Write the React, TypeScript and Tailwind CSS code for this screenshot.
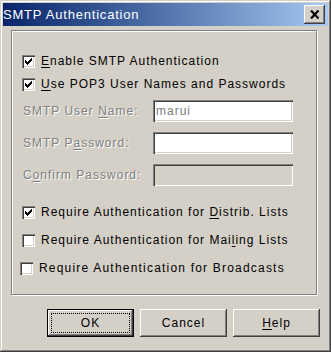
import React from "react";

const CheckMark = () => (
  <svg width="7" height="7" viewBox="0 0 7 7" shapeRendering="crispEdges" className="block">
    <rect x="6" y="0" width="1" height="1" fill="#000" />
    <rect x="5" y="1" width="2" height="1" fill="#000" />
    <rect x="0" y="2" width="1" height="1" fill="#000" />
    <rect x="4" y="2" width="3" height="1" fill="#000" />
    <rect x="0" y="3" width="2" height="1" fill="#000" />
    <rect x="3" y="3" width="3" height="1" fill="#000" />
    <rect x="0" y="4" width="5" height="1" fill="#000" />
    <rect x="1" y="5" width="3" height="1" fill="#000" />
    <rect x="2" y="6" width="1" height="1" fill="#000" />
  </svg>
);

const Checkbox = ({ checked }: { checked: boolean }) => (
  <div className="w-[13px] h-[13px] bg-white flex items-center justify-center shrink-0 shadow-[inset_1px_1px_#808080,inset_2px_2px_#404040,inset_-1px_-1px_#ffffff,inset_-2px_-2px_#d4d0c8]">
    {checked && <CheckMark />}
  </div>
);

const U = ({ children }: { children: React.ReactNode }) => (
  <span className="underline underline-offset-[2px] decoration-1">{children}</span>
);

const raised =
  "shadow-[inset_-1px_-1px_#404040,inset_1px_1px_#ffffff,inset_-2px_-2px_#808080,inset_2px_2px_#d4d0c8]";
const sunken =
  "shadow-[inset_1px_1px_#808080,inset_2px_2px_#404040,inset_-1px_-1px_#ffffff,inset_-2px_-2px_#d4d0c8]";
const disabledText = "text-[#808080] [text-shadow:1px_1px_0_#ffffff]";

export default function App() {
  return (
    <div className="w-[331px] h-[352px] bg-[#d4d0c8] p-[3px] flex flex-col font-['Liberation_Sans',Arial,sans-serif] text-[12px] tracking-[1px] text-black shadow-[inset_-1px_-1px_#404040,inset_1px_1px_#d4d0c8,inset_-2px_-2px_#808080,inset_2px_2px_#ffffff]">
      {/* Title bar */}
      <div className="h-[23px] flex items-center justify-between bg-linear-to-r from-[#0a246a] to-[#a6caf0] pl-[0px] pr-[3px]">
        <span className="text-white text-[13px] tracking-[0.8px] leading-none">SMTP Authentication</span>
        <div className={`w-[21px] h-[19px] bg-[#d4d0c8] flex items-center justify-center ${raised}`}>
          <svg width="10" height="9" viewBox="0 0 10 9" shapeRendering="crispEdges">
            <path d="M1 0.5 L8.5 8.5 M8.5 0.5 L1 8.5" stroke="#000" strokeWidth="2.2" fill="none" shapeRendering="geometricPrecision" />
          </svg>
        </div>
      </div>

      {/* Group box */}
      <div className="mt-[4px] ml-[8px] w-[306px] h-[265px] border border-[#808080] shadow-[inset_1px_1px_#ffffff,1px_1px_#ffffff] flex flex-col pt-[19px] pl-[10px]">
        <div className="h-[22px] flex items-center gap-[6px]">
          <Checkbox checked />
          <span>
            <U>E</U>nable SMTP Authentication
          </span>
        </div>
        <div className="mt-[1px] h-[22px] flex items-center gap-[6px]">
          <Checkbox checked />
          <span>
            <U>U</U>se POP3 User Names and Passwords
          </span>
        </div>

        <div className="mt-[5px] h-[22px] flex items-center pl-[1px]">
          <span className={`w-[130px] ${disabledText}`}>
            SMTP User <U>N</U>ame:
          </span>
          <div className={`w-[140px] h-[22px] bg-white flex items-center pl-[3px] text-[#808080] ${sunken}`}>marui</div>
        </div>
        <div className="mt-[10px] h-[22px] flex items-center pl-[1px]">
          <span className={`w-[130px] ${disabledText}`}>
            SMTP P<U>a</U>ssword:
          </span>
          <div className={`w-[140px] h-[22px] bg-white ${sunken}`}></div>
        </div>
        <div className="mt-[10px] h-[22px] flex items-center pl-[1px]">
          <span className={`w-[130px] ${disabledText}`}>
            C<U>o</U>nfirm Password:
          </span>
          <div className={`w-[140px] h-[22px] bg-[#d4d0c8] ${sunken}`}></div>
        </div>

        <div className="mt-[15px] h-[22px] flex items-center gap-[6px]">
          <Checkbox checked />
          <span>
            Require Authentication for <U>D</U>istrib. Lists
          </span>
        </div>
        <div className="mt-[6px] h-[22px] flex items-center gap-[6px]">
          <Checkbox checked={false} />
          <span>
            Require Authentication for Mai<U>l</U>ing Lists
          </span>
        </div>
        <div className="mt-[6px] h-[22px] flex items-center gap-[6px] -ml-[2px]">
          <Checkbox checked={false} />
          <span className="tracking-[1.2px]">Require Authentication for Broadcasts</span>
        </div>
      </div>

      {/* Buttons */}
      <div className="mt-[14px] flex gap-[6px] pl-[44px]">
        <div className="w-[87px] h-[28px] border border-black">
          <div className={`w-full h-full bg-[#d4d0c8] p-[3px] ${raised}`}>
            <div className="w-full h-full border border-dotted border-black flex items-center justify-center">OK</div>
          </div>
        </div>
        <div className={`w-[87px] h-[28px] bg-[#d4d0c8] flex items-center justify-center ${raised}`}>Cancel</div>
        <div className={`w-[87px] h-[28px] bg-[#d4d0c8] flex items-center justify-center ${raised}`}>
          <span>
            <U>H</U>elp
          </span>
        </div>
      </div>
    </div>
  );
}
